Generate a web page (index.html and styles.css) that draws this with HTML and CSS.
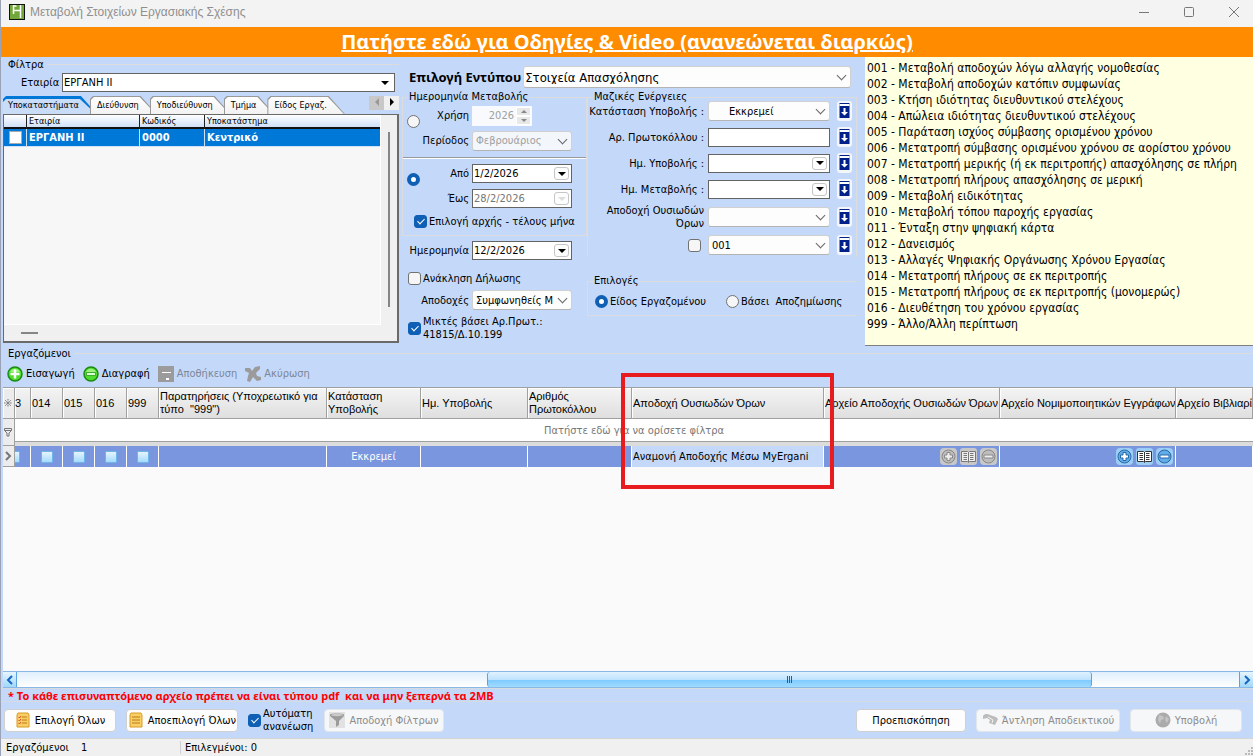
FILE: index.html
```html
<!DOCTYPE html>
<html lang="el">
<head>
    <meta charset="UTF-8">
    <meta name="viewport" content="width=device-width, initial-scale=1.0">
    <title>Μεταβολή Στοιχείων Εργασιακής Σχέσης</title>
    <link rel="stylesheet" href="styles.css">
</head>
<body>
    <!-- shared icons -->
    <svg class="sprite" aria-hidden="true">
        <symbol id="i-apply" viewBox="0 0 14 18">
            <rect x="2" y="1" width="10" height="15" fill="#00208a"/>
            <rect x="2" y="2" width="10" height="2" fill="#fff"/>
            <path d="M6 6h2v4h2.500L7 13.500 3.500 10H6z" fill="#fff"/>
        </symbol>
        <symbol id="i-plus" viewBox="0 0 17 17">
            <rect width="17" height="17" rx="4" class="tile"/>
            <circle cx="8.500" cy="8.500" r="6.500" class="disc"/>
            <path d="M7 4.500h3V7h2.500v3H10v2.500H7V10H4.500V7H7z" class="sign"/>
        </symbol>
        <symbol id="i-minus" viewBox="0 0 17 17">
            <rect width="17" height="17" rx="4" class="tile"/>
            <circle cx="8.500" cy="8.500" r="6.500" class="disc"/>
            <path d="M4 7h9v3H4z" class="sign"/>
        </symbol>
        <symbol id="i-book" viewBox="0 0 17 17">
            <rect width="17" height="17" rx="3" class="tile"/>
            <path d="M1.500 3.500h6l1 1 1-1h6v10h-6l-1 1-1-1h-6z" class="page"/>
            <path d="M8.500 4v10M3.500 5.500H7M3.500 7.500H7M3.500 9.500H7M3.500 11.500H7M10 5.500h3.500M10 7.500h3.500M10 9.500h3.500M10 11.500h3.500" class="lines"/>
        </symbol>
    </svg>

    <header class="titlebar">
        <svg class="logo" viewBox="0 0 16 16">
            <rect x=".5" y=".5" width="15" height="15" fill="#72a83a" stroke="#111"/>
            <path d="M4.500 1v9M4.500 6.500h7M11.500 1v13M4.500 2h3" fill="none" stroke="#fff" stroke-width="1.500"/>
        </svg>
        <h1>Μεταβολή Στοιχείων Εργασιακής Σχέσης</h1>
        <div class="window-buttons">
            <button aria-label="Ελαχιστοποίηση"><svg viewBox="0 0 12 12"><path d="M1 6.500h10"/></svg></button>
            <button aria-label="Μεγιστοποίηση"><svg viewBox="0 0 12 12"><rect x="1.500" y="1.500" width="9" height="9" rx="1"/></svg></button>
            <button aria-label="Κλείσιμο"><svg viewBox="0 0 12 12"><path d="M1 1l10 10M11 1L1 11"/></svg></button>
        </div>
    </header>

    <div class="banner"><a href="#">Πατήστε εδώ για Οδηγίες &amp; Video (ανανεώνεται διαρκώς)</a></div>

    <main>
        <div class="top">
            <section class="filters">
                <h2 class="caption">Φίλτρα</h2>
                <div class="company">
                    <label for="company">Εταιρία</label>
                    <span class="select flat"><select id="company"><option>ΕΡΓΑΝΗ ΙΙ</option></select></span>
                </div>
                <nav class="tabs">
                    <button class="tab active">Υποκαταστήματα</button>
                    <button class="tab">Διεύθυνση</button>
                    <button class="tab">Υποδιεύθυνση</button>
                    <button class="tab">Τμήμα</button>
                    <button class="tab">Είδος Εργαζ.</button>
                    <span class="tab-scroll">
                        <button disabled aria-label="Προηγούμενο"><svg viewBox="0 0 6 8"><path d="M5 0v8L1 4z"/></svg></button>
                        <button aria-label="Επόμενο"><svg viewBox="0 0 6 8"><path d="M1 0v8l4-4z"/></svg></button>
                    </span>
                </nav>
                <div class="branches">
                    <div class="branch-view">
                        <table>
                            <colgroup><col class="c-check"><col class="c-company"><col class="c-code"><col></colgroup>
                            <thead>
                                <tr><th></th><th>Εταιρία</th><th>Κωδικός</th><th>Υποκατάστημα</th></tr>
                            </thead>
                            <tbody>
                                <tr>
                                    <td><input type="checkbox" class="classic" aria-label="Επιλογή"></td>
                                    <td>ΕΡΓΑΝΗ ΙΙ</td><td>0000</td><td>Κεντρικό</td>
                                </tr>
                            </tbody>
                        </table>
                    </div>
                    <div class="vbar"><span></span></div>
                    <div class="hbar"><span></span></div>
                </div>
            </section>

            <section class="form">
                <div class="form-head">
                    <label for="formType">Επιλογή Εντύπου</label>
                    <span class="select large"><select id="formType"><option>Στοιχεία Απασχόλησης</option></select></span>
                </div>

                <div class="form-left">
                    <fieldset class="period">
                        <legend>Ημερομηνία Μεταβολής</legend>
                        <div class="option">
                            <input type="radio" name="period" aria-label="Χρήση και περίοδος">
                            <div class="fields">
                                <div class="field">
                                    <label for="year">Χρήση</label>
                                    <span class="spinner"><input id="year" type="text" value="2026" disabled><i></i><i></i></span>
                                </div>
                                <div class="field">
                                    <label for="month">Περίοδος</label>
                                    <span class="select"><select id="month" disabled><option>Φεβρουάριος</option></select></span>
                                </div>
                            </div>
                        </div>
                        <div class="option range">
                            <input type="radio" name="period" checked aria-label="Από έως">
                            <div class="fields">
                                <div class="field">
                                    <label for="from">Από</label>
                                    <span class="date"><input id="from" type="text" value="1/2/2026"><button aria-label="Ημερολόγιο"></button></span>
                                </div>
                                <div class="field">
                                    <label for="to">Έως</label>
                                    <span class="date"><input id="to" type="text" value="28/2/2026" disabled><button disabled aria-label="Ημερολόγιο"></button></span>
                                </div>
                            </div>
                        </div>
                        <label class="check whole-month"><input type="checkbox" checked>Επιλογή αρχής - τέλους μήνα</label>
                    </fieldset>
                    <div class="fields extra">
                        <div class="field">
                            <label for="date">Ημερομηνία</label>
                            <span class="date"><input id="date" type="text" value="12/2/2026"><button aria-label="Ημερολόγιο"></button></span>
                        </div>
                        <label class="check recall"><input type="checkbox">Ανάκληση Δήλωσης</label>
                        <div class="field pay">
                            <label for="pay">Αποδοχές</label>
                            <span class="select"><select id="pay"><option>Συμφωνηθείς Μικτές</option></select></span>
                        </div>
                        <label class="check"><input type="checkbox" checked><span>Μικτές βάσει Αρ.Πρωτ.:<br>41815/Δ.10.199</span></label>
                    </div>
                </div>

                <div class="form-right">
                    <fieldset class="bulk">
                        <legend>Μαζικές Ενέργειες</legend>
                        <div class="bulk-row">
                            <label for="status">Κατάσταση Υποβολής :</label>
                            <span class="select indent"><select id="status"><option>Εκκρεμεί</option></select></span>
                            <button class="apply" aria-label="Εφαρμογή"><svg><use href="#i-apply"/></svg></button>
                        </div>
                        <div class="bulk-row">
                            <label for="protocol">Αρ. Πρωτοκόλλου :</label>
                            <span class="date"><input id="protocol" type="text"></span>
                            <button class="apply" aria-label="Εφαρμογή"><svg><use href="#i-apply"/></svg></button>
                        </div>
                        <div class="bulk-row">
                            <label for="submitDate">Ημ. Υποβολής :</label>
                            <span class="date"><input id="submitDate" type="text"><button aria-label="Ημερολόγιο"></button></span>
                            <button class="apply" aria-label="Εφαρμογή"><svg><use href="#i-apply"/></svg></button>
                        </div>
                        <div class="bulk-row">
                            <label for="changeDate">Ημ. Μεταβολής :</label>
                            <span class="date"><input id="changeDate" type="text"><button aria-label="Ημερολόγιο"></button></span>
                            <button class="apply" aria-label="Εφαρμογή"><svg><use href="#i-apply"/></svg></button>
                        </div>
                        <div class="bulk-row tall">
                            <label for="terms">Αποδοχή Ουσιωδών Όρων</label>
                            <span class="select"><select id="terms"><option></option></select></span>
                            <button class="apply" aria-label="Εφαρμογή"><svg><use href="#i-apply"/></svg></button>
                        </div>
                        <div class="bulk-row">
                            <input type="checkbox" aria-label="Τύπος μεταβολής">
                            <span class="select"><select aria-label="Κωδικός μεταβολής"><option>001</option></select></span>
                            <button class="apply" aria-label="Εφαρμογή"><svg><use href="#i-apply"/></svg></button>
                        </div>
                    </fieldset>
                    <fieldset class="choices">
                        <legend>Επιλογές</legend>
                        <label class="check"><input type="radio" name="kind" checked>Είδος Εργαζομένου</label>
                        <label class="check"><input type="radio" name="kind">Βάσει&nbsp; Αποζημίωσης</label>
                    </fieldset>
                </div>
            </section>

            <ul class="codes">
                <li>001 - Μεταβολή αποδοχών λόγω αλλαγής νομοθεσίας</li>
                <li>002 - Μεταβολή αποδοχών κατόπιν συμφωνίας</li>
                <li>003 - Κτήση ιδιότητας διευθυντικού στελέχους</li>
                <li>004 - Απώλεια ιδιότητας διευθυντικού στελέχους</li>
                <li>005 - Παράταση ισχύος σύμβασης ορισμένου χρόνου</li>
                <li>006 - Μετατροπή σύμβασης ορισμένου χρόνου σε αορίστου χρόνου</li>
                <li>007 - Μετατροπή μερικής (ή εκ περιτροπής) απασχόλησης σε πλήρη</li>
                <li>008 - Μετατροπή πλήρους απασχόλησης σε μερική</li>
                <li>009 - Μεταβολή ειδικότητας</li>
                <li>010 - Μεταβολή τόπου παροχής εργασίας</li>
                <li>011 - Ένταξη στην ψηφιακή κάρτα</li>
                <li>012 - Δανεισμός</li>
                <li>013 - Αλλαγές Ψηφιακής Οργάνωσης Χρόνου Εργασίας</li>
                <li>014 - Μετατροπή πλήρους σε εκ περιτροπής</li>
                <li>015 - Μετατροπή πλήρους σε εκ περιτροπής (μονομερώς)</li>
                <li>016 - Διευθέτηση του χρόνου εργασίας</li>
                <li>999 - Άλλο/Άλλη περίπτωση</li>
            </ul>
        </div>

        <section class="employees">
            <h2 class="caption">Εργαζόμενοι</h2>
            <div class="toolbar">
                <button>
                    <svg viewBox="0 0 16 16"><circle cx="8" cy="8" r="7" fill="#4fdc2c" stroke="#1c8a14" stroke-width="1.500"/><path d="M3 6a5.500 5.500 0 0110 0z" fill="#9cf27c"/><path d="M8 3.500v9M3.500 8h9" stroke="#fff" stroke-width="2.500"/></svg>
                    Εισαγωγή
                </button>
                <button>
                    <svg viewBox="0 0 16 16"><circle cx="8" cy="8" r="7" fill="#4fdc2c" stroke="#1c8a14" stroke-width="1.500"/><path d="M3 6a5.500 5.500 0 0110 0z" fill="#9cf27c"/><path d="M3.500 6.500h9v3h-9z" fill="#dcffd0" stroke="#2a9a20" stroke-width=".8"/></svg>
                    Διαγραφή
                </button>
                <button disabled>
                    <svg viewBox="0 0 16 16"><path d="M0 0h16v16H0z" fill="#9b9b9b"/><path d="M4 6.500h9M8 12.500h3" stroke="#fff"/><path d="M8 12h3v2H8z" fill="#fff"/></svg>
                    Αποθήκευση
                </button>
                <button disabled>
                    <svg viewBox="0 0 16 16"><path d="M0 2h5l2 3 3-4 5-1v3l-4 4 1 3 4 1v3l-4 1-4-4-3 5-3-1 1-5 1-3-4-2z" fill="#9b9b9b"/></svg>
                    Ακύρωση
                </button>
            </div>

            <div class="grid">
                <table>
                    <colgroup>
                        <col class="g-mark"><col class="g-cut"><col class="g-code"><col class="g-code"><col class="g-code"><col class="g-code">
                        <col class="g-notes"><col class="g-status"><col class="g-date"><col class="g-protocol">
                        <col class="g-terms"><col class="g-file"><col class="g-file"><col>
                    </colgroup>
                    <thead>
                        <tr>
                            <th class="mark"><svg viewBox="0 0 10 10"><path d="M5 1v8M1 5h8M2 2l6 6M8 2L2 8" stroke-dasharray="1 .5"/></svg></th>
                            <th class="cut">3</th><th>014</th><th>015</th><th>016</th><th>999</th>
                            <th>Παρατηρήσεις (Υποχρεωτικό για<br>τύπο&nbsp; "999")</th>
                            <th>Κατάσταση<br>Υποβολής</th>
                            <th>Ημ. Υποβολής</th>
                            <th>Αριθμός<br>Πρωτοκόλλου</th>
                            <th>Αποδοχή Ουσιωδών Όρων</th>
                            <th>Αρχείο Αποδοχής Ουσιωδών Όρων</th>
                            <th>Αρχείο Νομιμοποιητικών Εγγράφων</th>
                            <th>Αρχείο Βιβλιαρίου</th>
                        </tr>
                    </thead>
                    <tbody>
                        <tr class="filter-row">
                            <td class="mark" rowspan="2"><svg viewBox="0 0 10 10"><path d="M1.500 1.500h7v2L6 6v3H4V6L1.500 3.500zM1.500 3.500h7"/></svg></td>
                            <td colspan="13">Πατήστε εδώ για να ορίσετε φίλτρα</td>
                        </tr>
                        <tr class="gap-row"><td colspan="13"></td></tr>
                        <tr class="row">
                            <td class="mark"><svg viewBox="0 0 10 10"><path d="M3 1l4 4-4 4" stroke-width="2"/></svg></td>
                            <td class="cut"><input type="checkbox" class="glass" aria-label="013"></td>
                            <td><input type="checkbox" class="glass" aria-label="014"></td>
                            <td><input type="checkbox" class="glass" aria-label="015"></td>
                            <td><input type="checkbox" class="glass" aria-label="016"></td>
                            <td><input type="checkbox" class="glass" aria-label="999"></td>
                            <td></td>
                            <td>Εκκρεμεί</td>
                            <td></td>
                            <td></td>
                            <td class="focused">Αναμονή Αποδοχής Μέσω MyErgani</td>
                            <td class="files">
                                <div>
                                    <button disabled aria-label="Προσθήκη"><svg><use href="#i-plus"/></svg></button>
                                    <button disabled aria-label="Προβολή"><svg><use href="#i-book"/></svg></button>
                                    <button disabled aria-label="Αφαίρεση"><svg><use href="#i-minus"/></svg></button>
                                </div>
                            </td>
                            <td class="files">
                                <div>
                                    <button aria-label="Προσθήκη"><svg><use href="#i-plus"/></svg></button>
                                    <button aria-label="Προβολή"><svg><use href="#i-book"/></svg></button>
                                    <button aria-label="Αφαίρεση"><svg><use href="#i-minus"/></svg></button>
                                </div>
                            </td>
                            <td></td>
                        </tr>
                    </tbody>
                </table>
                <div class="highlight"></div>
            </div>

            <div class="scrollbar">
                <button aria-label="Αριστερά"><svg viewBox="0 0 8 10"><path d="M6 1L2 5l4 4"/></svg></button>
                <div class="track"><div class="thumb"><i></i><i></i><i></i></div></div>
                <button aria-label="Δεξιά"><svg viewBox="0 0 8 10"><path d="M2 1l4 4-4 4"/></svg></button>
            </div>
        </section>

        <p class="warning">* Το κάθε επισυναπτόμενο αρχείο πρέπει να είναι τύπου pdf&nbsp; και να μην ξεπερνά τα 2MB</p>

        <div class="actions">
            <button class="btn">
                <svg viewBox="0 0 16 16"><path d="M3 1h10l1 2v12H2V3z" fill="#f9cf63" stroke="#d89a26"/><path d="M7 5h5M7 8h5M7 11h5" stroke="#b97a1a"/><path d="M3.500 5l1 1 1.500-2M3.500 8l1 1L6 7M3.500 11l1 1L6 10" fill="none" stroke="#e0452c"/></svg>
                Επιλογή Όλων
            </button>
            <button class="btn">
                <svg viewBox="0 0 16 16"><path d="M3 1h10l1 2v12H2V3z" fill="#f9cf63" stroke="#d89a26"/><path d="M4 5h8M4 8h8M4 11h8" stroke="#b97a1a"/></svg>
                Αποεπιλογή Όλων
            </button>
            <label class="check auto"><input type="checkbox" checked><span>Αυτόματη ανανέωση</span></label>
            <button class="btn wide" disabled>
                <svg viewBox="0 0 16 16"><path d="M0 0h16v16H0z" fill="#e2e2e2"/><path d="M1 2.500C1 1 15 1 15 2.500V4l-5 5v4l-3 2V9L1 4z" fill="#9c9c9c"/><ellipse cx="8" cy="3" rx="6" ry="1.200" fill="#ccc"/></svg>
                Αποδοχή Φίλτρων
            </button>
            <button class="btn push">Προεπισκόπηση</button>
            <button class="btn receipt" disabled>
                <svg viewBox="0 0 16 16"><path d="M1 4c2-3 5-2 7-1l6 2 2 2-3 6-6-2 1-3-3-2-4 1z" fill="#bcbcbc"/><path d="M6 5l5 3-1 3" fill="none" stroke="#f4f4f4"/></svg>
                Άντληση Αποδεικτικού
            </button>
            <button class="btn" disabled>
                <svg viewBox="0 0 16 16"><circle cx="8" cy="8" r="7.500" fill="#ababab"/><path d="M4 3l4 1 1 3-3 1-1 4-2-4zM11 4l3 3-2 4-2-3z" fill="#c4c4c4"/></svg>
                Υποβολή
            </button>
        </div>
    </main>

    <footer class="statusbar">
        <span class="count">Εργαζόμενοι <b>1</b></span>
        <span>Επιλεγμένοι: 0</span>
        <svg class="grip" viewBox="0 0 8 8"><path d="M6 0h2v2H6zM3 3h2v2H3zM6 3h2v2H6zM0 6h2v2H0zM3 6h2v2H3zM6 6h2v2H6z"/></svg>
    </footer>
</body>
</html>
```
FILE: styles.css
```css
* {
    box-sizing: border-box;
}
body {
    margin: 0;
    min-height: 100vh;
    display: flex;
    flex-direction: column;
    overflow: hidden;
    border-left: 1px solid #9aa3b5;
    background: #c4d9fa;
    color: #000;
    font-family: "DejaVu Sans Condensed", "DejaVu Sans", sans-serif;
    font-size: 11px;
    line-height: 13px;
}
button, input, select {
    font: inherit;
    color: inherit;
    margin: 0;
    padding: 0;
}
button {
    border: 0;
    background: none;
    white-space: nowrap;
}
.sprite {
    display: none;
}
ul, h1, h2, p {
    margin: 0;
    padding: 0;
    font-weight: normal;
}

/* title bar */
.titlebar {
    display: flex;
    align-items: center;
    height: 27px;
    padding: 0 13px 4px 8px;
    background: #f3f3f3;
}
.logo {
    width: 16px;
    height: 16px;
}
.titlebar h1 {
    margin-left: 5px;
    color: #8f8f8f;
    font-family: "Liberation Sans", Arial, sans-serif;
    font-size: 12px;
    line-height: 16px;
}
.window-buttons {
    display: flex;
    gap: 33px;
    margin-left: auto;
}
.window-buttons button {
    height: 12px;
    width: 12px;
}
.window-buttons svg {
    display: block;
    fill: none;
    stroke: #777;
}

.banner {
    height: 30px;
    background: #ff8c00;
    text-align: center;
    font-family: "Noto Sans", sans-serif;
    font-size: 20px;
    font-weight: bold;
    line-height: 30px;
}
.banner a {
    color: #fff;
}

main {
    flex: 1;
    display: flex;
    flex-direction: column;
}
.top {
    display: grid;
    grid-template-columns: 398px 466px 1fr;
    height: 289px;
}
.caption {
    display: flex;
    align-items: center;
    height: 14px;
    padding-left: 7px;
    font-size: 11px;
}
.caption::after {
    content: "";
    flex: 1;
    margin-left: 3px;
    border-top: 1px solid #dcdcdc;
}

/* controls */
.select {
    position: relative;
    display: block;
    width: 100%;
}
.select select {
    display: block;
    width: 100%;
    height: 20px;
    padding: 0 18px 0 3px;
    border: 1px solid #d0d0d0;
    border-bottom-color: #b4b4b4;
    border-radius: 3px;
    background: #fdfdfd;
    appearance: none;
    overflow: hidden;
}
.select::after {
    content: "";
    position: absolute;
    right: 6px;
    top: 5px;
    width: 6px;
    height: 6px;
    border: solid #666;
    border-width: 0 1px 1px 0;
    transform: rotate(45deg);
}
.select select:disabled {
    background: #f3f6fb;
    color: #a0a0a0;
    opacity: 1;
}
.select.flat select {
    height: 19px;
    padding-left: 1px;
    border: 1px solid #646464;
    border-radius: 0;
    background: #fff;
}
.select.flat::after, .date button::after {
    content: "";
    border: 4px solid transparent;
    border-top-color: #000;
    border-bottom: 0;
    width: 0;
    height: 0;
    transform: none;
}
.select.flat::after {
    top: 8px;
}
.select.large select {
    height: 22px;
    padding-left: 1px;
    font-size: 13px;
}
.select.large::after {
    top: 6px;
}
.select.indent select {
    padding-left: 20px;
}
.date {
    display: flex;
    align-items: center;
    width: 100%;
    min-width: 0;
    height: 19px;
    padding-right: 2px;
    border: 1px solid #646464;
    background: #fff;
}
.date input {
    flex: 1;
    min-width: 0;
    padding-left: 1px;
    border: 0;
    background: none;
}
.date input:disabled {
    color: #777;
}
.date button {
    flex: none;
    display: flex;
    align-items: center;
    justify-content: center;
    width: 15px;
    height: 13px;
    border: 1px solid #c6c6c6;
    border-radius: 3px;
    background: #fdfdfd;
}
.date button:disabled::after {
    border-top-color: #ddd;
}
.spinner {
    display: grid;
    grid-template: 9px 9px / 1fr 15px;
    column-gap: 2px;
    width: 60px;
    padding: 1px;
    background: #f8fafd;
}
.spinner input {
    grid-row: 1 / 3;
    min-width: 0;
    border: 0;
    background: none;
    color: #a0a0a0;
    text-align: right;
}
.spinner i {
    display: flex;
    align-items: center;
    justify-content: center;
    border: 1px solid #fff;
    background: #e8e8e8;
}
.spinner i::after {
    content: "";
    border: 3px solid transparent;
    border-bottom-color: #888;
    border-top: 0;
}
.spinner i:last-child::after {
    border-top: 3px solid #888;
    border-bottom: 0;
}
input[type="checkbox"], input[type="radio"] {
    flex: none;
    display: grid;
    place-items: center;
    width: 13px;
    height: 13px;
    border: 1px solid #717171;
    border-radius: 3px;
    background: #f6f6f6;
    appearance: none;
}
input[type="radio"] {
    border-radius: 50%;
}
input[type="checkbox"]:checked {
    border-color: #0f5fb4;
    background: #0f5fb4;
}
input[type="checkbox"]:checked::after {
    content: "";
    width: 3px;
    height: 6px;
    margin-bottom: 2px;
    border: solid #fff;
    border-width: 0 1px 1px 0;
    transform: rotate(45deg);
}
input[type="radio"]:checked {
    border: 4px solid #0f5fb4;
    background: #fff;
}
.check {
    display: flex;
    align-items: center;
    gap: 2px;
    white-space: nowrap;
}
fieldset {
    min-width: 0;
    margin: 0;
    padding: 0;
    border: 1px solid #dcdcdc;
}
legend {
    margin-left: 5px;
    padding: 0 1px;
    line-height: 12px;
}

/* filters */
.filters {
    display: flex;
    flex-direction: column;
    padding-bottom: 3px;
}
.company {
    display: flex;
    align-items: center;
    gap: 5px;
    height: 22px;
    padding: 0 4px 0 20px;
}
.company label {
    width: 36px;
    text-align: right;
}
.company .select {
    flex: 1;
}
.tabs {
    display: flex;
    height: 18px;
    margin-top: 3px;
    padding-left: 2px;
    font-size: 9px;
}
.tab {
    position: relative;
    isolation: isolate;
    height: 18px;
    margin-right: -7px;
    padding: 1px 18px 0 7px;
}
.tab::before, .tab::after {
    content: "";
    position: absolute;
    z-index: -1;
    inset: 0;
    background: #999;
    clip-path: polygon(0 3px, 3px 0, calc(100% - 16px) 0, 100% 100%, 0 100%);
}
.tab::after {
    inset: 1px 1px 0 1px;
    background: linear-gradient(#fff, #f2f2f2);
}
.tab.active {
    padding-left: 5px;
}
.tab.active::before {
    background: #0078d7;
}
.tab.active::after {
    inset: 3px 1px 0 0;
    background: #c9dcf8;
}
.tab-scroll {
    display: flex;
    height: 14px;
    margin-left: auto;
}
.tab-scroll button {
    width: 15px;
    background: #f0f0f0;
}
.tab-scroll button:disabled {
    background: #c8c8c8;
    fill: #999;
}
.tab-scroll svg {
    width: 6px;
    height: 8px;
}
.branches {
    flex: 1;
    display: grid;
    grid-template: 1fr 16px / 1fr 16px;
    margin-left: 2px;
    border: 1px solid #6a6a6a;
    border-bottom-width: 2px;
    border-right-width: 2px;
    background: #f0f0f0;
}
.branch-view {
    border: solid #fff;
    border-width: 0 1px 1px 0;
    background: #f7f7f7;
}
.branches table, .grid table {
    width: 100%;
    table-layout: fixed;
    border-collapse: separate;
    border-spacing: 0;
}
.c-check {
    width: 23px;
}
.c-company {
    width: 113px;
}
.c-code {
    width: 65px;
}
.branches th, .branches td {
    padding: 0 2px;
    text-align: left;
    white-space: nowrap;
}
.branches th {
    height: 14px;
    border-right: 1px solid #222;
    border-bottom: 2px solid #111;
    background: linear-gradient(#fff, #cfe0f7);
    font-size: 9px;
    font-weight: normal;
    line-height: 11px;
}
.branches td {
    height: 18px;
    border-right: 1px solid #cfe0f7;
    border-bottom: 1px solid #cfe0f7;
    background: #0078d7;
    color: #fff;
    font-weight: bold;
}
.branches th:last-child, .branches td:last-child {
    border-right: 0;
}
.branches .classic {
    margin-left: 3px;
    border: 1px solid #aaa;
    border-radius: 0;
    background: #fff;
}
.vbar span {
    display: block;
    width: 2px;
    height: 175px;
    margin: 17px 0 0 7px;
    background: #868686;
}
.hbar span {
    display: block;
    width: 17px;
    height: 2px;
    margin: 7px 0 0 17px;
    background: #868686;
}

/* form */
.form {
    display: grid;
    grid-template: 34px 1fr / 185px 270px;
    padding-left: 3px;
}
.form-head {
    grid-column: 1 / 3;
    display: flex;
    align-items: center;
    gap: 2px;
    padding: 6px 6px 0 7px;
}
.form-head label {
    font-family: "Noto Sans", sans-serif;
    font-size: 13px;
    font-weight: bold;
    white-space: nowrap;
}
.form-head .select {
    flex: 1;
}
.option {
    display: flex;
    align-items: center;
    gap: 2px;
    padding: 0 14px 4px 4px;
    border-bottom: 1px solid #999;
}
.option .fields {
    flex: 1;
    min-width: 0;
}
.option.range {
    padding-top: 2px;
    padding-bottom: 0;
    border-top: 1px solid #fff;
    border-bottom: 0;
}
.option > input {
    margin-bottom: 14px;
}
.field {
    display: flex;
    align-items: center;
    gap: 3px;
    height: 25px;
}
.field label {
    flex: none;
    width: 47px;
    text-align: right;
}
.whole-month {
    height: 24px;
    padding: 0 0 4px 11px;
}
.extra {
    padding: 2px 15px 0 6px;
}
.extra .field label {
    width: 61px;
}
.recall {
    height: 30px;
}
.extra .field.pay {
    height: 14px;
    margin-bottom: 8px;
}
.bulk {
    height: 166px;
    border-bottom: 0;
}
.bulk-row {
    display: grid;
    grid-template-columns: 116px 122px 15px;
    align-items: center;
    column-gap: 4px;
    height: 26px;
}
.bulk legend + .bulk-row {
    margin-top: -5px;
}
.bulk-row.tall {
    height: 30px;
}
.bulk-row label {
    text-align: right;
}
.bulk-row > input {
    margin-left: 100px;
}
.apply {
    width: 15px;
    height: 20px;
    margin-left: 3px;
    border-radius: 3px;
    background: #f4f6fa;
}
.apply svg {
    display: block;
    width: 15px;
    height: 18px;
}
.choices {
    display: flex;
    align-items: center;
    gap: 20px;
    height: 41px;
    margin-top: 18px;
    padding-left: 7px;
    border-right: 0;
}
.choices legend {
    margin-left: -2px;
}

/* code list */
.codes {
    min-width: 0;
    padding: 3px 0 0 2px;
    overflow: hidden;
    border-bottom: 1px solid #808080;
    background: #ffffe1;
    font-size: 12px;
    line-height: 16px;
    list-style: none;
    white-space: nowrap;
}

/* employees */
.employees {
    flex: 1;
    display: flex;
    flex-direction: column;
}
.toolbar {
    display: flex;
    gap: 8px;
    height: 27px;
    padding-left: 6px;
}
.toolbar button {
    display: flex;
    align-items: center;
    gap: 3px;
}
.toolbar button:disabled {
    color: #7d8796;
}
.toolbar svg {
    width: 16px;
    height: 16px;
}
.grid {
    position: relative;
    flex: 1;
    margin-left: 2px;
    border-top: 1px solid #a0a0a0;
    background: #fafafa;
}
.g-mark {
    width: 12px;
}
.g-cut {
    width: 16px;
}
.g-code {
    width: 32px;
}
.g-notes {
    width: 168px;
}
.g-status {
    width: 94px;
}
.g-date {
    width: 107px;
}
.g-protocol {
    width: 104px;
}
.g-terms {
    width: 192px;
}
.g-file {
    width: 176px;
}
.grid th, .grid td {
    padding: 0 1px;
    overflow: hidden;
    white-space: nowrap;
}
.grid th {
    height: 31px;
    border-right: 1px solid #a0a0a0;
    border-bottom: 1px solid #a0a0a0;
    background: linear-gradient(#f4f4f4, #dfdfdf);
    box-shadow: inset 1px 1px #fff;
    font-family: "Liberation Sans", Arial, sans-serif;
    font-weight: normal;
    text-align: left;
}
.grid .mark {
    padding: 0;
    border-right: 1px solid #a0a0a0;
    border-bottom: 1px solid #a0a0a0;
    background: #ececec;
    text-align: center;
}
.mark svg {
    display: block;
    width: 10px;
    height: 10px;
    fill: none;
    stroke: #777;
}
.grid th.cut {
    padding: 0;
}
.filter-row td {
    height: 23px;
    border-bottom: 1px solid #a0a0a0;
    background: #fff;
    color: #777;
    text-align: center;
}
.gap-row td {
    height: 4px;
    background: #dcdcdc;
}
.grid .row td {
    height: 21px;
    border-right: 1px solid #fff;
    background: #7a96df;
    color: #fff;
    text-align: center;
}
.grid .row .mark {
    border-right-color: #a0a0a0;
    background: #ececec;
}
.grid .row .focused {
    background: #c4d9fa;
    color: #000;
    text-align: left;
}
.row .glass {
    width: 12px;
    height: 12px;
    margin: 0 auto;
    border: 1px solid #6db5ea;
    border-radius: 1px;
    background: linear-gradient(#e6f5ff, #a5dbfb);
}
.row .cut .glass {
    margin-left: -8px;
}
.files div {
    display: flex;
    justify-content: flex-end;
    gap: 3px;
    padding-right: 1px;
}
.files button {
    --tile: #9ccdf5;
    --disc: #62ade9;
    --edge: #2568a8;
    --sign: #fff;
    --ink: #333;
}
.files button:disabled {
    --tile: #c8c8c8;
    --disc: #bdbdbd;
    --edge: #888;
    --sign: #eee;
    --ink: #777;
}
.files button, .files svg {
    display: block;
    width: 17px;
    height: 17px;
}
.tile {
    fill: var(--tile);
}
.disc {
    fill: var(--disc);
    stroke: var(--edge);
}
.sign {
    fill: var(--sign);
    stroke: var(--edge);
}
.page {
    fill: var(--sign);
    stroke: var(--ink);
}
.lines {
    fill: none;
    stroke: var(--ink);
}
/* marks the terms column */
.highlight {
    position: absolute;
    left: 618px;
    top: -15px;
    width: 213px;
    height: 116px;
    border: 4px solid #e81c1f;
}
.scrollbar {
    display: flex;
    height: 17px;
    margin-left: 2px;
    border: solid #8ab8e6;
    border-width: 1px 0;
    background: linear-gradient(#e0effc, #fff);
}
.scrollbar button {
    width: 14px;
    background: linear-gradient(#e6f5ff, #9fd8fb);
}
.scrollbar button:first-child {
    border-right: 1px solid #5ba3e0;
}
.scrollbar button:last-child {
    border-left: 1px solid #5ba3e0;
}
.scrollbar svg {
    display: block;
    width: 8px;
    height: 10px;
    margin: 0 auto;
    fill: none;
    stroke: #1566c0;
    stroke-width: 2;
}
.track {
    flex: 1;
}
.thumb {
    display: flex;
    align-items: center;
    justify-content: center;
    gap: 1px;
    width: 49.5%;
    height: 15px;
    margin-left: 38.5%;
    border: 1px solid #5ba3e0;
    border-width: 0 1px;
    border-radius: 3px;
    background: linear-gradient(#e0f2ff 0, #bfe3fd 50%, #80caff 55%, #9fdcff);
}
.thumb i {
    width: 1px;
    height: 7px;
    background: #245c9c;
}

/* footer */
.warning {
    height: 14px;
    padding-left: 7px;
    border-bottom: 1px solid #d6dbe2;
    border-top: 1px solid #d6dbe2;
    color: #f00;
    font-family: "Noto Sans", sans-serif;
    font-weight: bold;
    line-height: 14px;
}
.actions {
    display: flex;
    align-items: center;
    gap: 10px;
    height: 36px;
    padding: 0 11px 0 3px;
}
.btn {
    display: flex;
    align-items: center;
    justify-content: center;
    gap: 4px;
    width: 112px;
    height: 23px;
    border: 1px solid #d0d0d0;
    border-radius: 4px;
    background: #fdfdfd;
}
.btn:disabled {
    border-color: #e2e5ea;
    background: #f6f7f9;
    color: #8c8c8c;
}
.btn svg {
    flex: none;
    width: 16px;
    height: 16px;
}
.btn.wide {
    width: 120px;
}
.btn.receipt {
    width: 144px;
}
.btn.push {
    width: 110px;
    margin-left: auto;
}
.auto {
    width: 66px;
    white-space: normal;
}
.statusbar {
    display: flex;
    align-items: center;
    height: 18px;
    padding-left: 5px;
    background: #f0f0f0;
    border-top: 1px solid #d4d4d4;
}
.count {
    width: 175px;
    margin-right: 4px;
    border-right: 1px solid #d0d0d0;
}
.count b {
    margin-left: 9px;
    font-weight: normal;
}
.grip {
    width: 8px;
    height: 8px;
    margin: 6px 0 0 auto;
    fill: #bbb;
}
```
